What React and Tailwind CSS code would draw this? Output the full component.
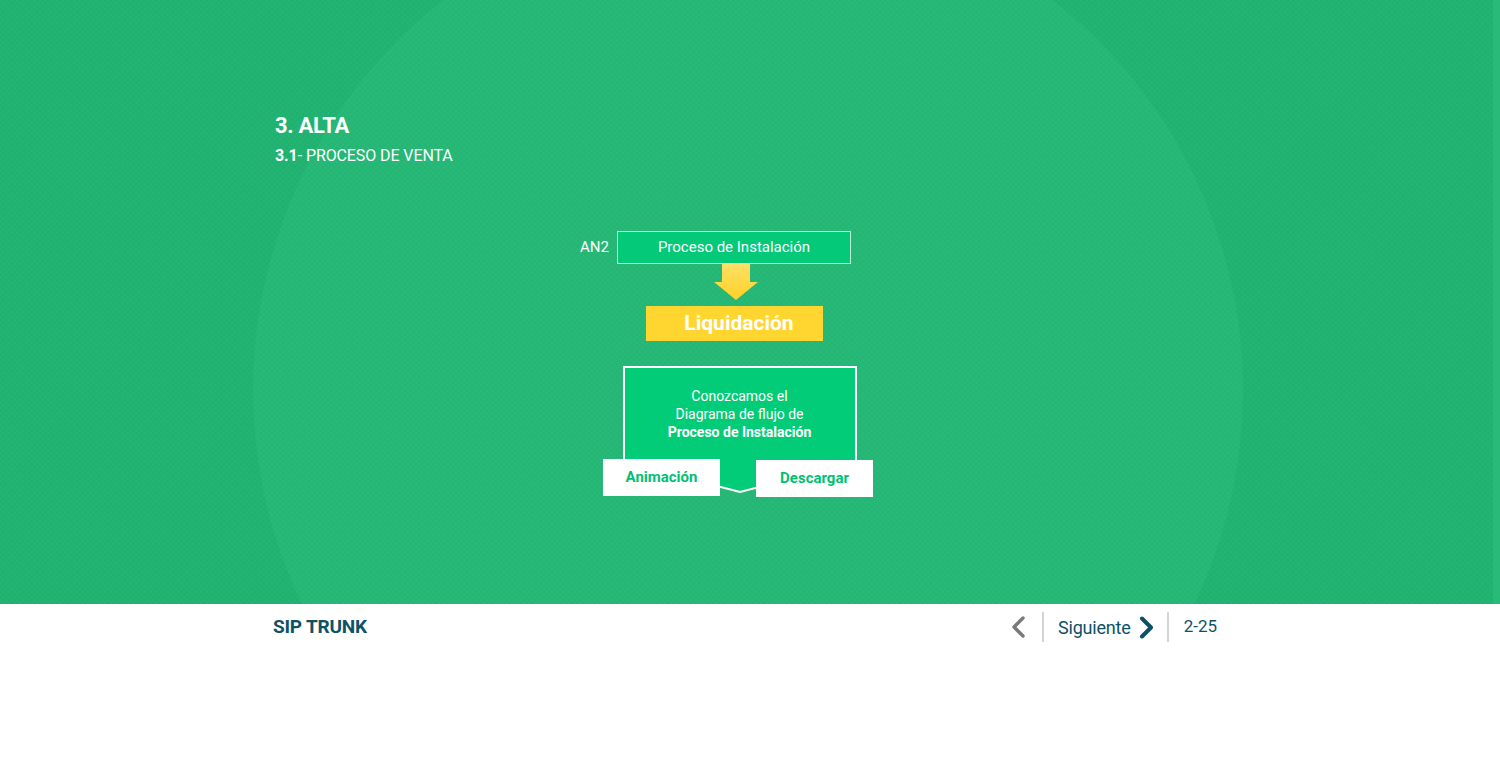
import React from "react";

const font = { fontFamily: "Roboto, 'Liberation Sans', sans-serif" };

function ArrowDown() {
  return (
    <svg width="44" height="36" viewBox="0 0 44 36" className="block">
      <defs>
        <linearGradient id="ag" x1="0" y1="0" x2="0" y2="1">
          <stop offset="0" stopColor="#ffe066" />
          <stop offset="1" stopColor="#ffd026" />
        </linearGradient>
      </defs>
      <polygon points="8,0 36,0 36,18 44,18 22,36 0,18 8,18" fill="url(#ag)" />
    </svg>
  );
}

function ChevronLeft() {
  return (
    <svg width="16" height="22" viewBox="0 0 16 22" className="block">
      <polyline points="13,2 4,11 13,20" fill="none" stroke="#7a7a7a" strokeWidth="3.4" strokeLinecap="round" strokeLinejoin="round" />
    </svg>
  );
}

function ChevronRight() {
  return (
    <svg width="15" height="23" viewBox="0 0 15 23" className="block">
      <polyline points="3,2.5 12,11.5 3,20.5" fill="none" stroke="#0f4f63" strokeWidth="4" strokeLinecap="round" strokeLinejoin="round" />
    </svg>
  );
}

export default function App() {
  return (
    <div className="w-[1500px] h-[768px] bg-white overflow-hidden" style={font}>
      <div className="relative h-[604px] bg-[#22b574] overflow-hidden">
        <div className="absolute left-[253px] top-[-105px] w-[990px] h-[990px] rounded-full bg-[#27ba78]" />
        <div className="absolute inset-0 opacity-60 bg-[repeating-linear-gradient(45deg,rgba(0,0,0,0.025)_0px,rgba(0,0,0,0.025)_2px,transparent_2px,transparent_4px),repeating-linear-gradient(-45deg,rgba(0,0,0,0.025)_0px,rgba(0,0,0,0.025)_2px,transparent_2px,transparent_4px)]" />
        <div className="absolute right-0 top-0 bottom-0 w-[7px] bg-[#27ba78]" />

        <div className="relative pl-[275px] pt-[112px] text-white">
          <h1 className="text-[22px] leading-[28px] font-bold tracking-[-0.3px]">3. ALTA</h1>
          <p className="text-[16px] leading-[22px] mt-[5px] tracking-[-0.1px]">
            <span className="font-bold">3.1</span>
            <span className="font-normal">- PROCESO DE VENTA</span>
          </p>
        </div>

        <div className="relative ml-[580px] mt-[64px] w-[300px]">
          <div className="flex items-center">
            <span className="text-white text-[15px] w-[37px]">AN2</span>
            <div className="w-[234px] h-[33px] bg-[#03c978] border border-[#b8f5da] flex items-center justify-center text-white text-[15px]">
              Proceso de Instalación
            </div>
          </div>
          <div className="ml-[37px] w-[234px] flex flex-col items-center">
            <div className="ml-[3px]">
              <ArrowDown />
            </div>
            <div className="mt-[6px] w-[177px] h-[35px] bg-[#ffd630] flex items-center justify-center pl-[10px] text-white text-[21px] font-bold">
              Liquidación
            </div>
          </div>

          <div className="mt-[25px] ml-[23px] w-[270px] flex flex-col items-center">
            <div className="relative ml-[3px] w-[234px] h-[127px]">
              <svg width="234" height="127" viewBox="0 0 234 127" className="absolute inset-0">
                <polygon points="1,1 233,1 233,96 117,126 1,96" fill="#02cc78" stroke="#ffffff" strokeWidth="2" />
              </svg>
              <div className="relative pt-[21px] text-center text-white text-[14px] leading-[18px]">
                <div className="font-normal">Conozcamos el</div>
                <div className="font-normal">Diagrama de flujo de</div>
                <div className="font-bold">Proceso de Instalación</div>
              </div>
            </div>
            <div className="relative -mt-[34px] w-[270px] flex justify-between items-start">
              <button className="w-[117px] h-[37px] bg-white text-[#02bf72] text-[15px] font-bold flex items-center justify-center">
                Animación
              </button>
              <button className="mt-[1px] w-[117px] h-[37px] bg-white text-[#02bf72] text-[15px] font-bold flex items-center justify-center">
                Descargar
              </button>
            </div>
          </div>
        </div>
      </div>

      <div className="ml-[273px] w-[944px] h-[46px] flex items-center justify-between">
        <span className="text-[19px] font-bold text-[#0d5266] tracking-[-0.2px]">SIP TRUNK</span>
        <div className="flex items-center">
          <ChevronLeft />
          <div className="ml-[16px] w-[2px] h-[30px] bg-[#d4d4d4]" />
          <span className="ml-[14px] text-[18px] text-[#0d5266] tracking-[-0.2px]">Siguiente</span>
          <div className="ml-[8px]">
            <ChevronRight />
          </div>
          <div className="ml-[13px] w-[2px] h-[30px] bg-[#d4d4d4]" />
          <span className="ml-[15px] text-[17px] text-[#0d5266]">2-25</span>
        </div>
      </div>
    </div>
  );
}
